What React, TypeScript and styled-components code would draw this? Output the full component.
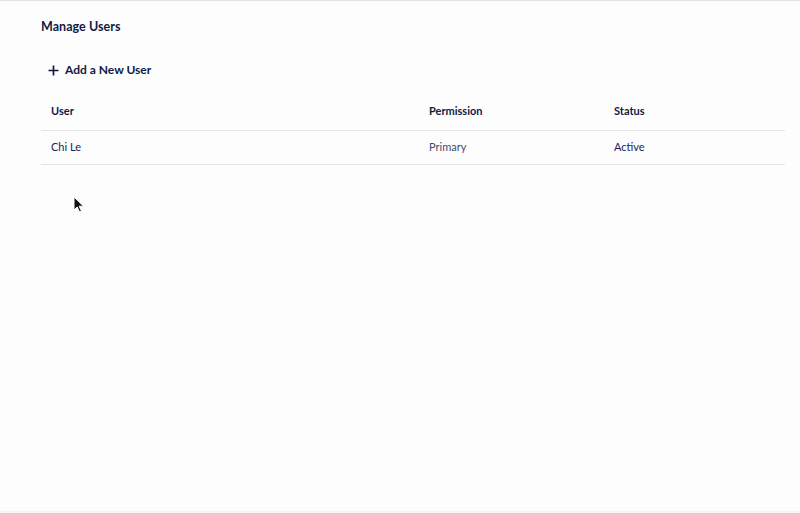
import styled, { createGlobalStyle } from "styled-components";

const GlobalStyle = createGlobalStyle`
  html, body {
    margin: 0;
    padding: 0;
    background: #fdfdfe;
  }
  body {
    font-family: Lato, "Noto Sans", sans-serif;
    color: #101a44;
  }
`;

interface UserRow {
  name: string;
  permission: string;
  status: string;
}

const users: UserRow[] = [{ name: "Chi Le", permission: "Primary", status: "Active" }];

const App = () => {
  return (
    <>
      <GlobalStyle />
      <Page>
        <Title>Manage Users</Title>
        <AddButton>
          <svg width="11" height="11" viewBox="0 0 11 11">
            <path d="M5.5 0.5v10M0.5 5.5h10" stroke="#101a44" strokeWidth="1.7" />
          </svg>
          Add a New User
        </AddButton>
        <Table>
          <HeadRow>
            <HeadCell>User</HeadCell>
            <HeadCell>Permission</HeadCell>
            <HeadCell>Status</HeadCell>
          </HeadRow>
          {users.map((u) => (
            <BodyRow key={u.name}>
              <Cell>{u.name}</Cell>
              <Cell $muted>{u.permission}</Cell>
              <Cell>{u.status}</Cell>
            </BodyRow>
          ))}
        </Table>
        <Cursor width="12" height="17" viewBox="0 0 12 17">
          <path d="M1 1v13l3.2-3 2.3 5 2-0.9-2.3-4.9h4.3z" fill="#111" stroke="#fff" strokeWidth="1" />
        </Cursor>
      </Page>
    </>
  );
};

export default App;

const Page = styled.div`
  position: relative;
  width: 800px;
  height: 513px;
  box-sizing: border-box;
  border-top: 1px solid #e2e3e6;
  border-bottom: 2px solid #f4f4f5;
  padding: 18px 15px 0 41px;
`;

const Title = styled.h1`
  margin: 0;
  font-size: 12.5px;
  font-weight: 700;
  line-height: 16px;
  letter-spacing: 0.05px;
`;

const AddButton = styled.button`
  display: flex;
  align-items: center;
  gap: 6px;
  margin: 27px 0 0 7px;
  padding: 0;
  border: none;
  background: none;
  font-family: inherit;
  font-size: 12px;
  font-weight: 700;
  color: #101a44;
  line-height: 16px;
  cursor: pointer;
`;

const Table = styled.div`
  margin-top: 14px;
  display: flex;
  flex-direction: column;
`;

const Columns = styled.div`
  display: grid;
  grid-template-columns: 378px 185px 1fr;
  box-sizing: border-box;
  padding: 0 0 2px 10px;
  border-bottom: 1px solid #e3e4e7;
  align-items: center;
`;

const HeadRow = styled(Columns)`
  height: 39px;
`;

const BodyRow = styled(Columns)`
  height: 34px;
`;

const HeadCell = styled.div`
  font-size: 11px;
  font-weight: 700;
  color: #101a44;
`;

const Cell = styled.div<{ $muted?: boolean }>`
  font-size: 11px;
  color: ${({ $muted }) => ($muted ? "#454b6a" : "#1c2450")};
`;

const Cursor = styled.svg`
  position: absolute;
  left: 73px;
  top: 195px;
`;
